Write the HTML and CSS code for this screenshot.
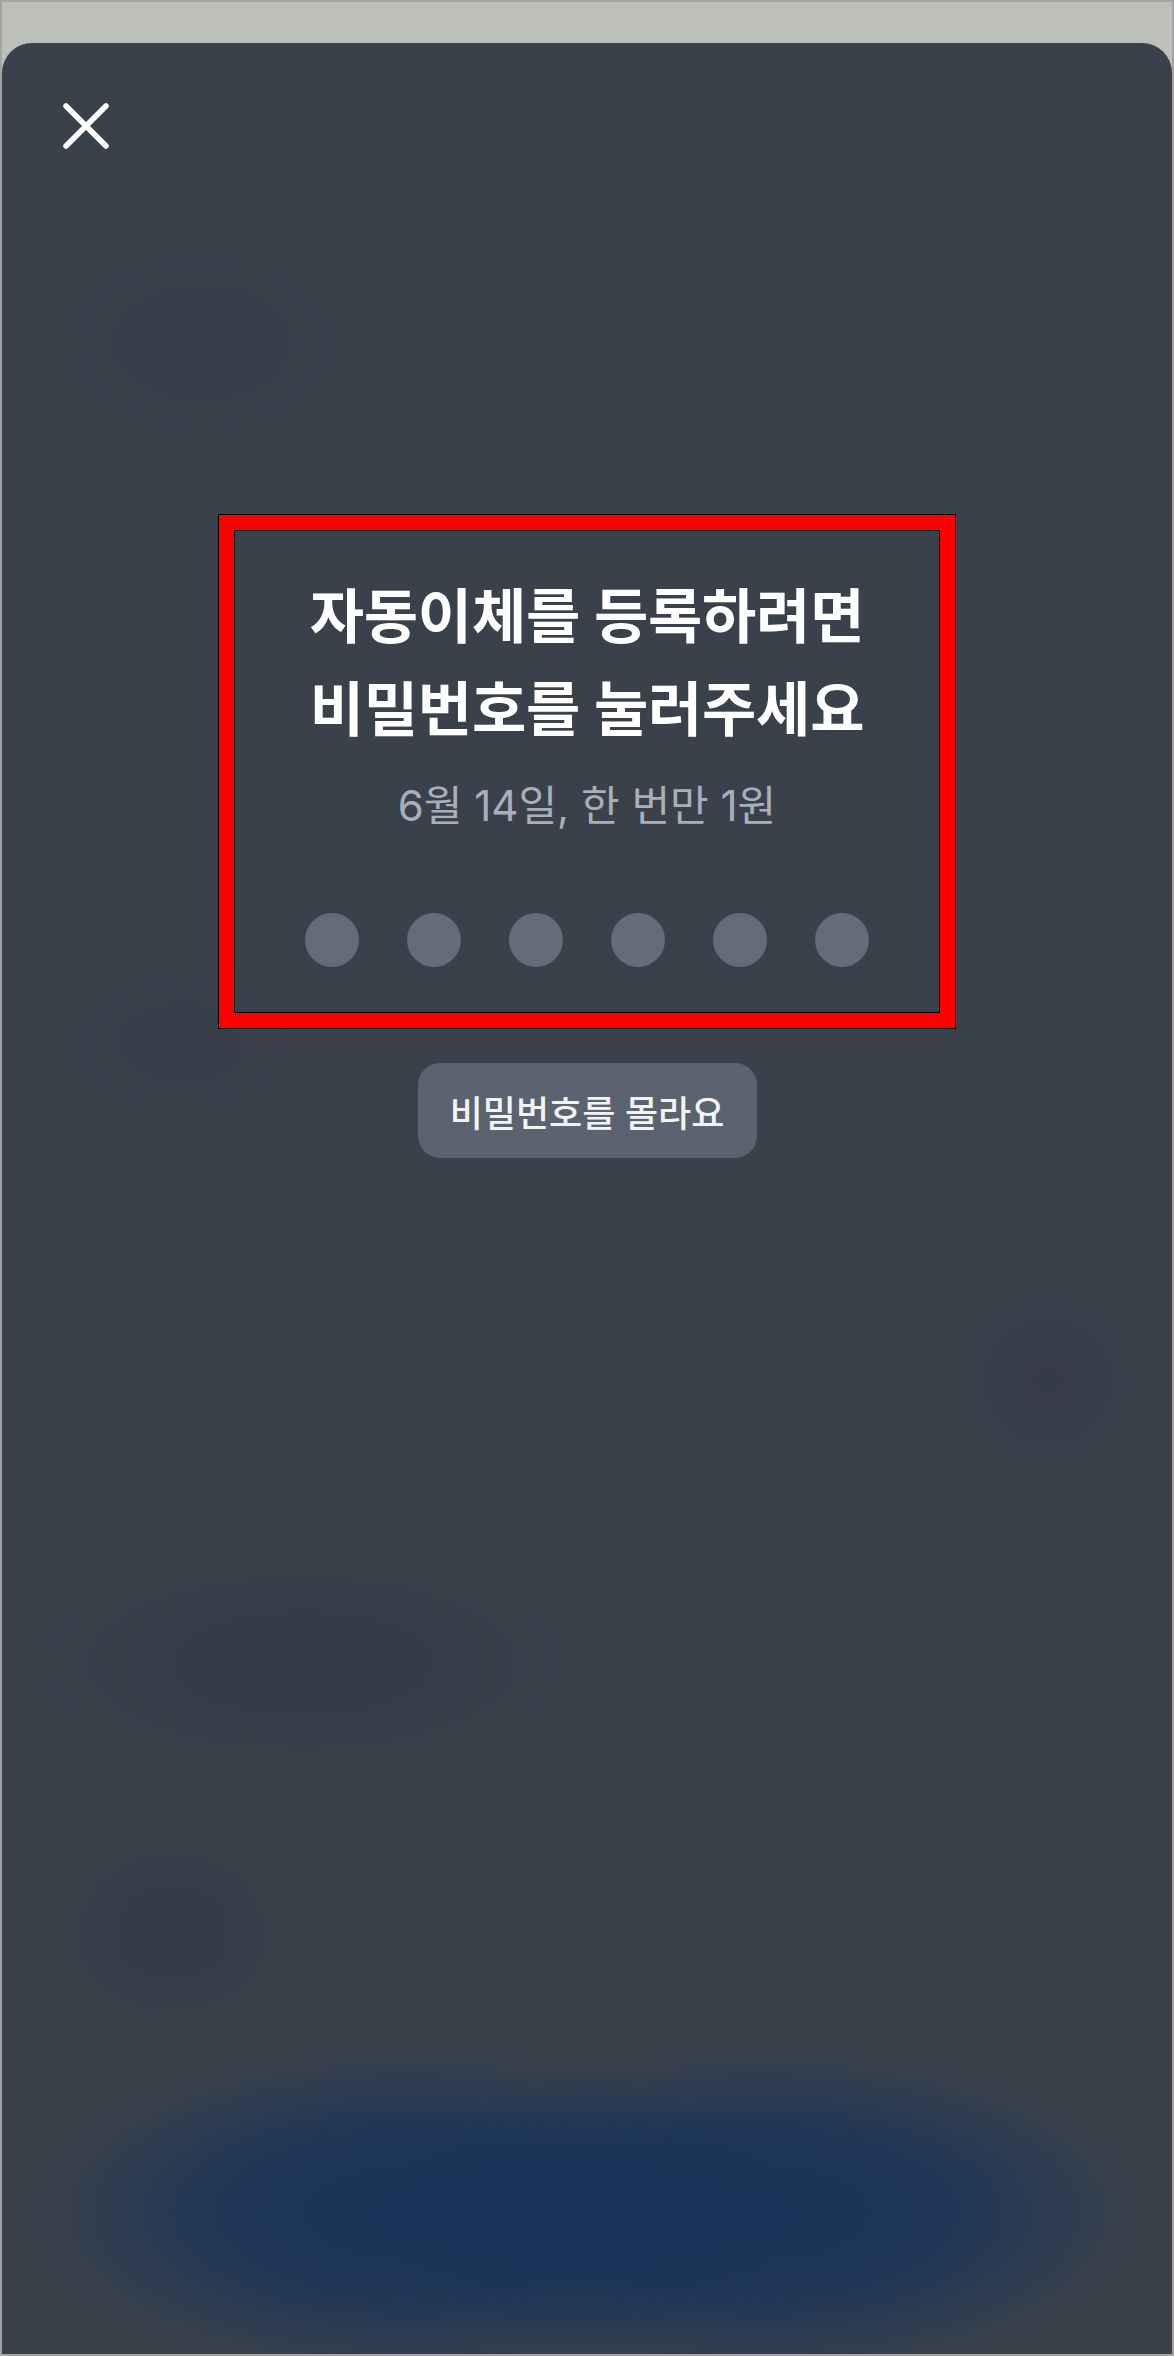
FILE: index.html
```html
<!DOCTYPE html>
<html lang="ko">
<head>
    <meta charset="UTF-8">
    <meta name="viewport" content="width=device-width, initial-scale=1.0">
    <title>자동이체 등록</title>
    <link rel="stylesheet" href="styles.css">
</head>
<body>
    <div class="frame">
        <div class="sheet">
            <button class="close-button" aria-label="닫기">
                <svg width="46" height="46" viewBox="0 0 46 46">
                    <path d="M3 3 L43 43 M43 3 L3 43" stroke="#fff" stroke-width="5.5" stroke-linecap="round" fill="none"/>
                </svg>
            </button>

            <div class="pin-area">
                <div class="highlight">
                    <h1 class="title">자동이체를 등록하려면<br>비밀번호를 눌러주세요</h1>
                    <p class="subtitle">6월 14일, 한 번만 1원</p>
                    <div class="dots">
                        <span class="dot"></span>
                        <span class="dot"></span>
                        <span class="dot"></span>
                        <span class="dot"></span>
                        <span class="dot"></span>
                        <span class="dot"></span>
                    </div>
                </div>

                <button class="forgot-button">비밀번호를 몰라요</button>
            </div>
        </div>
    </div>
</body>
</html>
```

FILE: styles.css
```css
/* Basic styles */
html, body {
    margin: 0;
    padding: 0;
}
body {
    font-family: Inter, "Noto Sans CJK KR", sans-serif;
    background-color: #bdbfbb;
}
.frame {
    height: 2356px;
    box-sizing: border-box;
    border: 2px solid #a4a5a3;
    padding-top: 41px;
    display: flex;
    flex-direction: column;
}

/* Dark sheet with the blurred screen behind it */
.sheet {
    flex: 1;
    border-radius: 30px 30px 0 0;
    background-color: #3a414b;
    background-image:
        radial-gradient(ellipse 380px 165px at 410px 2170px, rgba(22, 50, 90, 0.9) 0%, rgba(22, 50, 90, 0.75) 50%, rgba(22, 50, 90, 0) 100%),
        radial-gradient(ellipse 380px 165px at 760px 2170px, rgba(22, 50, 90, 0.9) 0%, rgba(22, 50, 90, 0.75) 50%, rgba(22, 50, 90, 0) 100%),
        radial-gradient(ellipse 300px 120px at 300px 1620px, rgba(50, 56, 68, 0.9), rgba(50, 56, 68, 0) 100%),
        radial-gradient(ellipse 130px 110px at 170px 1890px, rgba(50, 56, 68, 0.9), rgba(50, 56, 68, 0) 100%),
        radial-gradient(ellipse 100px 100px at 1046px 1338px, rgba(52, 57, 70, 0.8), rgba(52, 57, 70, 0) 100%),
        radial-gradient(ellipse 170px 110px at 200px 300px, rgba(52, 58, 70, 0.7), rgba(52, 58, 70, 0) 100%),
        radial-gradient(ellipse 140px 90px at 180px 1000px, rgba(52, 58, 70, 0.6), rgba(52, 58, 70, 0) 100%);
    padding: 60px 0 0 61px;
    box-sizing: border-box;
}
.close-button {
    display: block;
    background: none;
    border: none;
    padding: 0;
    width: 46px;
    height: 46px;
    cursor: pointer;
}
.close-button svg {
    display: block;
}

.pin-area {
    display: flex;
    flex-direction: column;
    align-items: center;
    margin-left: -61px;
    margin-top: 366px;
}
.highlight {
    width: 736px;
    box-sizing: border-box;
    border: 15px solid #ff0000;
    outline: 1px solid #000;
    box-shadow: inset 0 0 0 1px #000;
    padding: 40px 0 46px;
    text-align: center;
}
.title {
    margin: 0;
    color: #fff;
    font-size: 59px;
    font-weight: 700;
    line-height: 93px;
    letter-spacing: -0.2px;
}
.subtitle {
    margin: 22px 0 0;
    color: #a9afba;
    font-size: 42px;
    line-height: 56px;
}
.dots {
    display: flex;
    justify-content: center;
    gap: 48px;
    margin-top: 79px;
}
.dot {
    width: 54px;
    height: 54px;
    border-radius: 50%;
    background-color: #656b7a;
}

.forgot-button {
    margin-top: 35px;
    width: 339px;
    height: 95px;
    border: none;
    border-radius: 22px;
    background-color: #5b6270;
    color: #f2f3f5;
    font-family: Inter, "Noto Sans CJK KR", sans-serif;
    font-size: 36px;
    font-weight: 500;
    cursor: pointer;
}
```
